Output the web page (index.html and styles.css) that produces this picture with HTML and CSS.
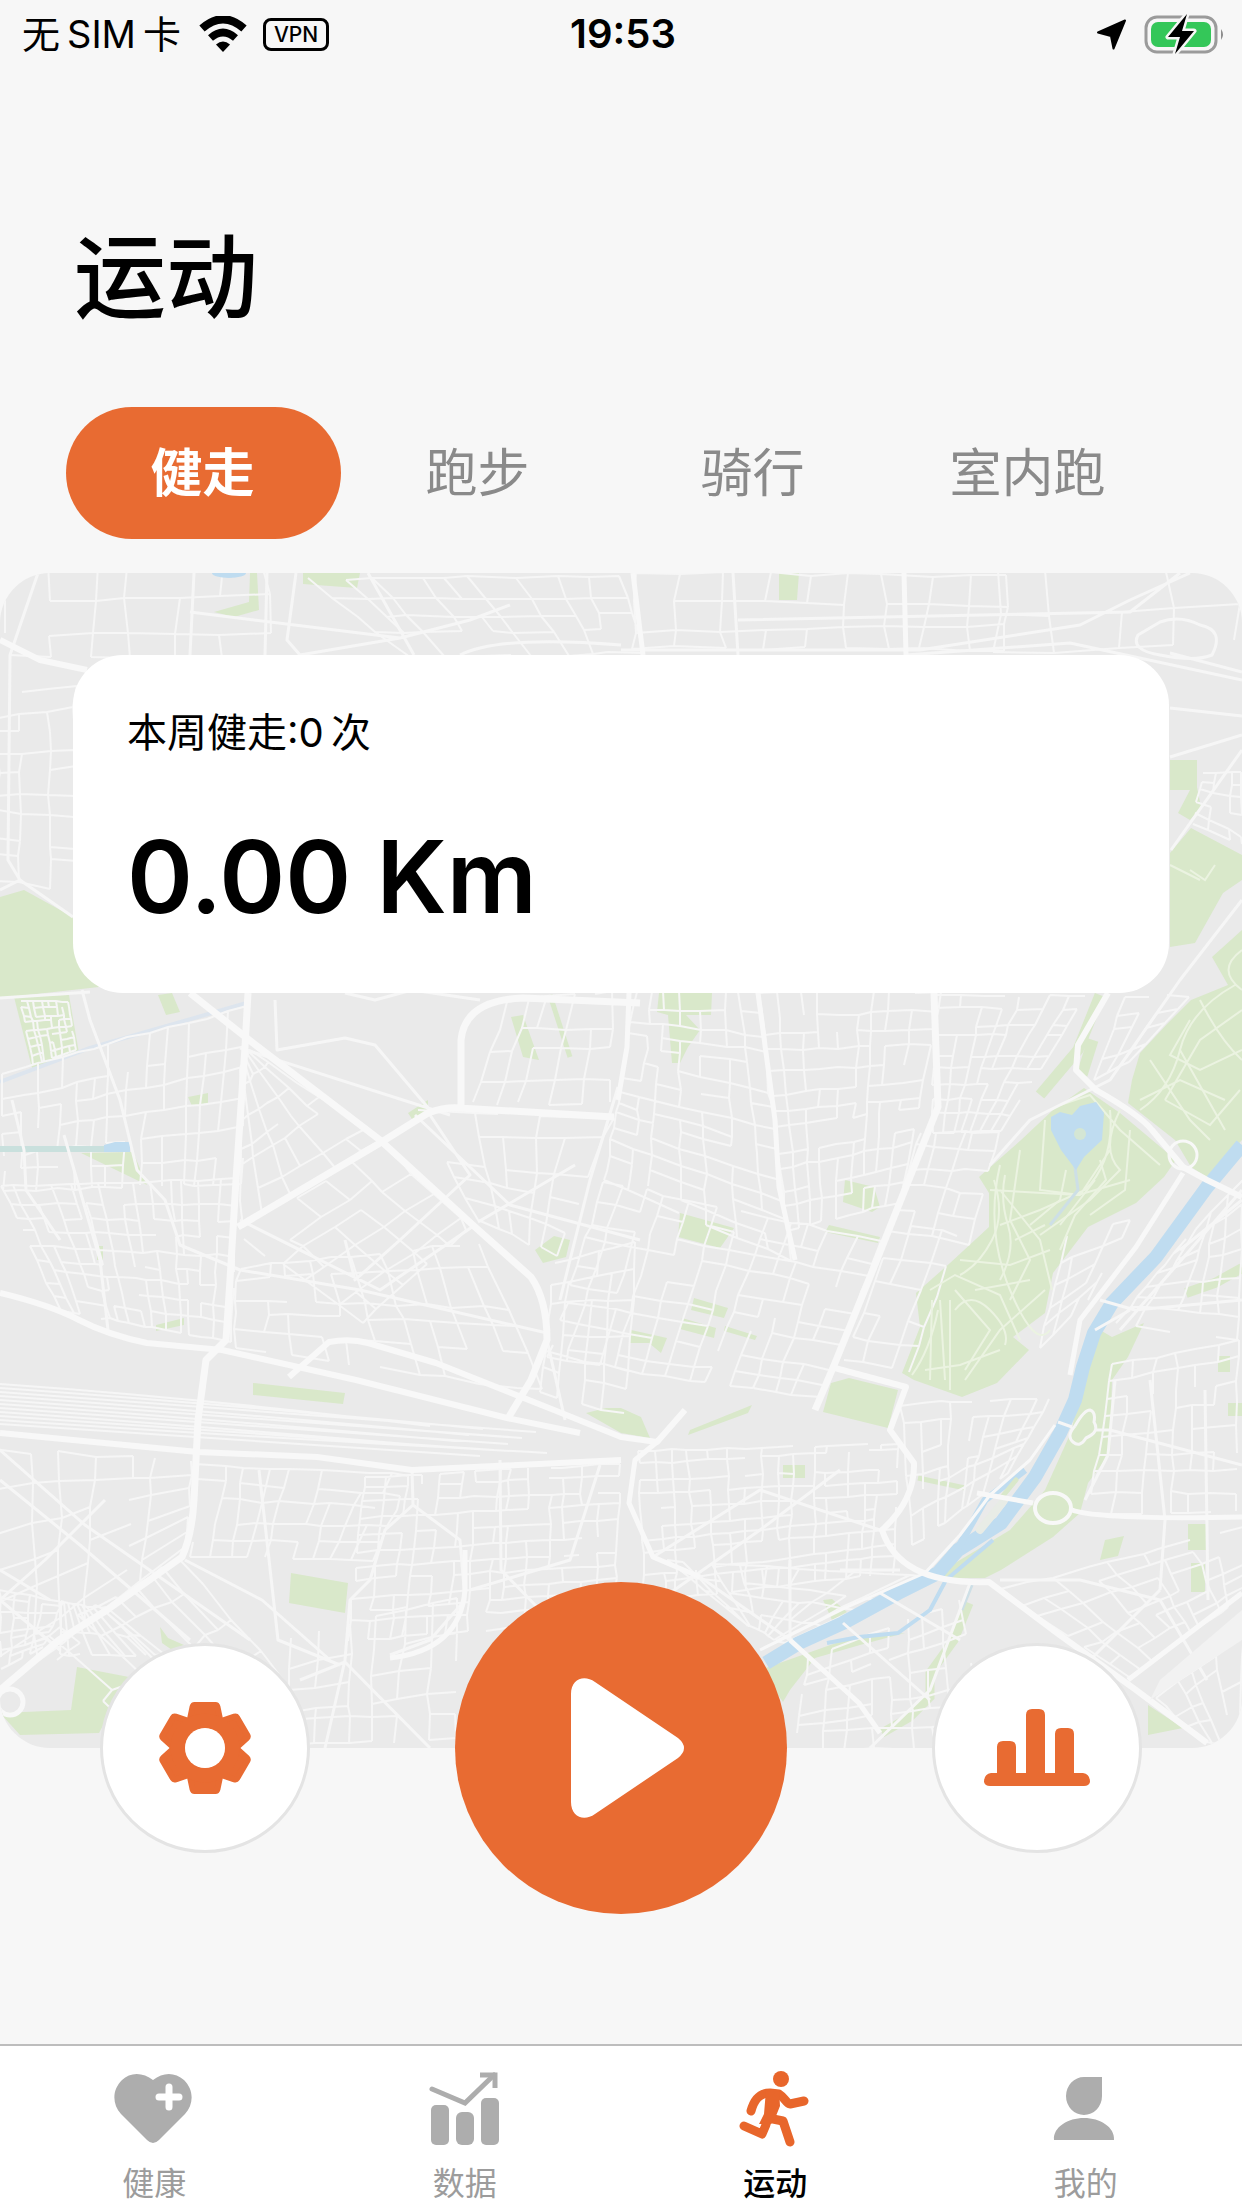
FILE: index.html
```html
<!DOCTYPE html>
<html lang="zh-CN">
<head>
<meta charset="utf-8">
<meta name="viewport" content="width=device-width, initial-scale=1">
<title>运动</title>
<link rel="stylesheet" href="styles.css">
</head>
<body>
<header class="status">
  <div class="status-left">
    <span class="carrier"><span>无</span><span>SIM</span><span>卡</span></span>
    <svg class="wifi" viewBox="0 0 48 36" aria-hidden="true">
      <path d="M3 12.500Q24 -6 45 12.500" fill="none" stroke="#000" stroke-width="8"/>
      <path d="M11.500 22Q24 11 36.500 22" fill="none" stroke="#000" stroke-width="7.500"/>
      <path d="M17 28.500Q24 22.500 31 28.500L24 36Z"/>
    </svg>
    <span class="vpn">VPN</span>
  </div>
  <time class="clock">19:53</time>
  <div class="status-right">
    <svg class="locate" viewBox="0 0 32 32" aria-hidden="true"><path d="M29 2.500 17.500 30.500 15 18 2 14.500Z" stroke="#000" stroke-width="2" stroke-linejoin="round"/></svg>
    <svg class="battery" viewBox="0 0 82 42" aria-hidden="true">
      <rect x="2" y="4" width="70" height="35" rx="11" fill="none" stroke="#9b9b9b" stroke-width="3"/>
      <path d="M77 16Q81 21.500 77 27Z" fill="#8e8e8e"/>
      <rect x="7" y="9" width="60" height="25" rx="7" fill="#34c759"/>
      <path d="M43 1 24 24H36L31 41 50 18H38Z" fill="#000" stroke="#f7f7f7" stroke-width="5" paint-order="stroke" stroke-linejoin="round"/>
    </svg>
  </div>
</header>

<main class="page">
  <h1 class="title">运动</h1>
  <div class="modes" role="tablist">
    <button class="mode mode-active" role="tab" aria-selected="true">健走</button>
    <button class="mode" role="tab" aria-selected="false">跑步</button>
    <button class="mode" role="tab" aria-selected="false">骑行</button>
    <button class="mode" role="tab" aria-selected="false">室内跑</button>
  </div>

  <section class="map">
    <svg class="map-art" viewBox="0 573 1242 1175" preserveAspectRatio="xMidYMid slice" aria-hidden="true">
      <rect y="573" width="1242" height="1175" fill="#eaeaea"/>
      <g fill="#d9e8ca">
        <path d="M250 573H257L259 610 234 617 214 612 249 602ZM303 573H360L357 588 303 584ZM779 573H799L797 600H779Z"/>
        <path d="M0 897 24 890 73 917 75 947 99 987 0 998ZM14 997 69 995 79 1053 32 1068ZM158 995 172 993 180 1012 166 1015Z"/>
        <path d="M511 1017 523 1015 539 1060 523 1057ZM188 1097 208 1093V1103L192 1106ZM408 1113 428 1100V1108L414 1122ZM81 1153 133 1152 147 1185Z"/>
        <path d="M535 1250 554 1236 570 1240 566 1257 543 1263ZM253 1383 345 1393 343 1404 253 1395ZM97 1246H103V1260H97ZM156 1325 184 1318 184 1325 156 1331Z"/>
        <path d="M586 1413 606 1408 621 1408 641 1417 650 1438 621 1433ZM659 993H712L711 1015H686L700 1030 688 1047 680 1063H672L668 1015 657 1012Z"/>
        <path d="M845 1180 874 1187 880 1207 872 1212 843 1202ZM829 1225 880 1237 878 1243 825 1232ZM680 1213 734 1228 720 1248 678 1237ZM694 1298 728 1308 724 1318 691 1310ZM682 1318 716 1328 714 1338 680 1329ZM631 1330 667 1338 661 1353 649 1343 629 1343ZM725 1326 757 1336 755 1340 724 1331Z"/>
        <path d="M831 1383 849 1378 898 1390 888 1428 823 1412ZM752 1405 748 1413 688 1435 690 1430Z"/>
        <path d="M1170 760H1197V787L1201 807 1190 820 1178 813 1190 790H1170ZM1191 828 1242 855V880L1223 893 1195 943 1170 947V853Z"/>
        <path d="M1084 1088 1053 1110 1021 1140 979 1177 989 1193V1227L950 1263 916 1293 920 1327 902 1373 914 1380 962 1397 997 1383 1029 1350 1013 1337 1045 1313 1053 1273 1088 1227 1136 1203 1164 1177 1176 1160 1120 1113Z"/>
        <path d="M1242 930 1212 957 1228 985 1191 1000 1168 1023 1140 1053 1132 1080 1128 1103 1175 1140 1191 1167 1207 1177 1242 1140Z"/>
        <path d="M1144 1323 1112 1337 1100 1330 1080 1380 1072 1430 1045 1490 1010 1530 960 1560 930 1578H985L1001 1570 1053 1537 1080 1513 1088 1483 1110 1453 1112 1380 1128 1357Z"/>
        <path d="M760 1670 850 1638 905 1633 860 1645 815 1658 790 1690 783 1702ZM823 1600 832 1599 847 1612 832 1620Z"/>
        <path d="M77 1667 129 1677 99 1733 20 1735 0 1713 71 1710ZM291 1573 348 1583 345 1613 289 1603ZM160 1627 168 1638 184 1645 172 1650 162 1643ZM1148 1705 1183 1728 1148 1735ZM1191 1563H1205V1592H1191ZM1228 1403H1242V1416H1228ZM783 1465H805V1478H783ZM1188 1524H1208V1550H1188ZM1105 1540 1124 1536 1118 1556 1100 1560ZM1218 1356H1230V1372H1218Z"/>
      </g>
      <g fill="none" stroke="#d9e8ca">
        <path d="M550 995 570 1057" stroke-width="5"/>
        <path d="M1100 995 1078 1050 1040 1095M1093 1040 1082 1075" stroke-width="11"/>
        <path d="M969 1603 954 1640 930 1673 930 1697 910 1717 882 1733" stroke-width="9"/>
        <path d="M1186 1293 1215 1283 1242 1268" stroke-width="10"/>
        <path d="M918 1478 965 1488" stroke-width="5"/>
      </g>
      <path d="M0 1082 90 1048 250 1002" fill="none" stroke="#dde5ee" stroke-width="4"/>
      <g id="streets" fill="none" stroke="#f6f6f6" stroke-width="2" stroke-linejoin="round"></g>
      <g fill="none" stroke="#ebf3e1" stroke-width="2">
        <path d="M1000 1165Q985 1230 1010 1290T1050 1330M1000 1190 1040 1240 1052 1290M1045 1120 1040 1190 1080 1195 1110 1150M990 1190 1078 1195 1130 1180M1110 1110Q1115 1160 1085 1190L1040 1210 1000 1225M930 1290 955 1275 1000 1295 1020 1340M950 1300V1390M932 1300 930 1380M940 1300 945 1380M965 1380 1000 1330 1045 1290M960 1260 1010 1265 1050 1250M925 1370 960 1365 1000 1350M955 1290 990 1330 965 1370M1120 1110Q1100 1150 1120 1170L1090 1200 1040 1235M1060 1105 1090 1095 1120 1130 1160 1165M1020 1150 1010 1220 1030 1260 1010 1300"/>
        <path d="M1235 985Q1190 1010 1180 1050T1140 1110M1242 1010 1200 1040 1165 1100M1242 1050 1200 1070 1170 1055 1190 1020M1150 1060 1190 1120 1210 1140M1165 1100 1210 1125 1240 1090M1200 1000Q1220 1040 1242 1060M1242 950Q1215 970 1242 990M1140 1100 1180 1080 1225 1100M1180 1050 1225 1130M1190 870 1205 880 1215 865M1170 865 1200 880"/>
        <path d="M994 1180Q1005 1215 992 1240T960 1275M1005 1175Q1000 1200 1008 1225T1000 1280M1066 1170 1060 1200 1030 1225M1100 1160 1106 1180 1075 1215 1060 1250M1095 1180 1060 1225M1130 1130 1125 1190 1090 1215M955 1310Q970 1290 990 1310T1005 1345M938 1310Q930 1350 912 1375M975 1290 1030 1280M1015 1240 1045 1225"/>
      </g>
      <g fill="none" stroke="#bfdcf0" stroke-linejoin="round">
        <path d="M1242 1145 1207 1187 1156 1257 1112 1303 1094 1333 1083 1367 1075 1400 1060 1433 1035 1477 1001 1523 958 1550 938 1573 898 1593 843 1623 799 1643 766 1663" stroke-width="14"/>
        <path d="M1025 1470 985 1500 958 1548" stroke-width="7"/>
        <path d="M993 1540 946 1580 930 1610 898 1633 859 1637 827 1643" stroke-width="4"/>
        <path d="M1074 1160 1078 1190 1050 1225M972 1585 962 1610" stroke-width="3" stroke="#cddfe6"/>
        <path d="M0 1149H108" stroke-width="6" stroke="#c9e0dd"/>
        <path d="M1003 1502 980 1530" stroke="#e8ece6" stroke-width="8" stroke-linecap="round"/>
        <path d="M1016 1480 1002 1497" stroke="#d9e8ca" stroke-width="5" stroke-linecap="round"/>
      </g>
      <g fill="#bfdcf0">
        <path d="M1051 1117 1060 1112 1072 1115 1080 1106 1096 1102 1104 1113 1102 1140 1084 1157 1076 1170 1061 1150 1051 1130ZM104 1145 115 1142H130V1152H104Z"/>
        <ellipse cx="229" cy="573" rx="17" ry="5"/>
        <circle cx="1080" cy="1134" r="6" fill="#d4e6d4"/>
      </g>
      <g fill="none" stroke="#f6f6f6" stroke-width="3" stroke-linejoin="round">
        <path d="M38 573 10 655 8 860 20 880 0 890M20 880 73 917M194 573 190 655M267 573 265 655M296 573 287 640 300 655M368 573 414 655M190 612 400 638M300 655 400 638 470 620 510 605M460 655Q500 635 621 645M733 573 738 655M621 650H920L1080 625 1130 600 1190 573M906 655 1070 643 1242 680M738 620 1130 612 1180 573M1170 708 1242 716M1170 757 1242 735M1242 750 1171 850M1170 653 1242 672M1160 655Q1130 650 1138 635L1160 622Q1180 615 1200 625 1225 630 1212 655 1195 662 1160 655"/>
        <path d="M1242 900 1180 980 1110 1080 1030 1120 990 1165M0 998 90 992M82 990 90 1020 120 1100 137 1170 165 1200 180 1245 240 1270 360 1290 547 1333M12 1100 24 1150 26 1190 60 1240M64 1135 100 1260 108 1330M240 1048 450 1115M618 1087 590 1180 560 1300M275 1000 277 1050 345 1038 375 1045 430 1110M345 993 375 1000 412 990 480 1000M415 1115 510 1205 640 1240M430 1115 470 1175 400 1240 355 1280 345 1240M475 1225 380 1290 240 1220M478 1222 575 1165"/>
        <path d="M547 1340 565 1420M1180 1250 1242 1200M1100 1300 1135 1310 1242 1300M1095 1330 1130 1310M1120 1330 1190 1250 1242 1190M1058 1422 1072 1427M1096 1430 1110 1430 1242 1465M1115 1380 1108 1455 1085 1500M1150 1380 1165 1520 1160 1590M1205 1390 1208 1600M1075 1426Q1084 1410 1090 1410 1096 1412 1094 1422 1100 1432 1086 1438 1080 1448 1073 1442 1066 1436 1075 1426"/>
        <path d="M0 1450 85 1525 250 1640M0 1480 80 1545 190 1640M0 1600 60 1650M50 1600 0 1570M105 1500 45 1560 0 1600M185 1560 262 1600 330 1660M259 1470 278 1640 340 1665M412 1470 413 1505 385 1530 370 1580 350 1600 345 1660 325 1748M413 1505 460 1540 465 1600 430 1640 390 1655M500 1460 501 1570 540 1610M300 1680 345 1662 430 1748M600 1465 570 1560 470 1590"/>
        <path d="M700 1577 790 1640M653 1557 760 1490 880 1530M790 1560V1640M840 1570 900 1570M660 1600 760 1530 840 1470M970 1583 930 1690 870 1748M843 1623 930 1700M880 1593 960 1640M1000 1580 1080 1580 1160 1600 1207 1680M1070 1680 1160 1590"/>
      </g>
      <g fill="none" stroke="#f8f8f8" stroke-width="7" stroke-linejoin="round">
        <path d="M248 993 245 1047 236 1180 230 1280 226 1340 206 1360 198 1420 194 1500Q192 1535 182 1557L107 1610 59 1640 0 1690"/>
        <path d="M190 993 253 1043 380 1140 475 1227 531 1277Q547 1300 547 1340L531 1380 507 1420"/>
        <path d="M238 1227 380 1143 428 1113Q445 1107 459 1108L614 1117M461 1108V1040Q465 1000 523 998L640 1003"/>
        <path d="M0 1293Q50 1305 79 1320T147 1343L222 1350 356 1380 507 1418 580 1433M289 1377 329 1342Q350 1338 368 1343L436 1363 554 1410 621 1437 657 1442 685 1410" stroke-width="6"/>
        <path d="M0 1433 198 1452 317 1457 412 1470 621 1460M0 640 40 660 87 670" stroke-width="6"/>
        <path d="M629 993 627 1047 618 1100M758 993 775 1120 779 1187 795 1260M633 573 643 655M904 573 906 655" stroke-width="5"/>
        <path d="M934 993 938 1107 914 1167 874 1267 835 1363 815 1410"/>
        <path d="M1108 993 1078 1045 1076 1070 1096 1090Q1140 1115 1152 1130L1183 1167 1207 1180 1242 1197" stroke-width="6"/>
        <path d="M1183 1173 1136 1247 1080 1320 1070 1375" stroke-width="5"/>
        <path d="M1055 1425 1030 1460 990 1495 960 1535 925 1573 845 1608 760 1650" stroke-width="3"/>
        <path d="M831 1367 906 1387 890 1430 914 1463Q915 1500 882 1530 900 1585 989 1582L1057 1633 1136 1690 1207 1743" stroke-width="6"/>
        <path d="M977 1493 1033 1503M1072 1510Q1100 1520 1242 1517M1242 1593 1128 1680M790 1640 859 1703 880 1733M657 1442 635 1460 629 1503 653 1557 700 1577" stroke-width="5"/>
        <path d="M465 1550V1590Q460 1650 390 1658" stroke-width="5"/>
        <ellipse cx="1053" cy="1508" rx="18" ry="15" stroke-width="4"/>
        <circle cx="1183" cy="1155" r="14" stroke-width="3"/>
        <circle cx="10" cy="1702" r="13" stroke-width="5"/>
      </g>
      <path d="M1242 1610 1160 1680 1150 1700 1242 1640Z" fill="#f2f2f2"/>
    </svg>
    <div class="card">
      <p class="card-label">本周健走:0&thinsp;次</p>
      <p class="card-value">0.00 Km</p>
    </div>
  </section>

  <div class="controls">
    <button class="round" aria-label="设置">
      <svg width="92" height="92" viewBox="-46 -46 92 92" aria-hidden="true">
        <defs><path id="tooth" d="M-10.500 -43H10.500Q12 -43 12.500 -41L15 -29H-15L-12.500 -41Q-12 -43 -10.500 -43Z"/></defs>
        <g fill="#e86b32" stroke="#e86b32" stroke-width="6" stroke-linejoin="round">
          <use href="#tooth"/><use href="#tooth" transform="rotate(60)"/><use href="#tooth" transform="rotate(120)"/>
          <use href="#tooth" transform="rotate(180)"/><use href="#tooth" transform="rotate(240)"/><use href="#tooth" transform="rotate(300)"/>
        </g>
        <circle r="27" fill="none" stroke="#e86b32" stroke-width="15"/>
        <circle r="20" fill="#fff"/>
      </svg>
    </button>
    <button class="start" aria-label="开始">
      <svg width="116" height="142" viewBox="0 0 116 142" aria-hidden="true"><path d="M1 17C1 2 14 -3 25 5L108 61Q120 71 108 81L25 137C14 145 1 140 1 125Z" fill="#fff"/></svg>
    </button>
    <button class="round" aria-label="统计">
      <svg width="106" height="80" viewBox="0 0 106 80" aria-hidden="true">
        <path d="M0 74Q0 66 7 65H13V39Q13 33 19 33H26Q32 33 32 39V65H42V7Q42 1 48 1H55Q61 1 61 7V65H71V26Q71 20 77 20H84Q90 20 90 26V65H99Q106 66 106 74 105 78 100 78H6Q1 78 0 74Z" fill="#e86b32"/>
      </svg>
    </button>
  </div>
</main>

<nav class="tabbar">
  <a class="tab" href="#health">
    <svg width="80" height="80" viewBox="0 0 80 80" aria-hidden="true">
      <path d="M39 10C29 2 16 2 8 10C-2 20 -2 34 7 44L33 70Q39 76 45 70L71 44C80 34 80 20 70 10C61 2 49 2 39 10Z" fill="#adadad"/>
      <path d="M55 17V37M45 27H65" stroke="#fff" stroke-width="7" stroke-linecap="round"/>
    </svg>
    <span>健康</span>
  </a>
  <a class="tab" href="#data">
    <svg width="80" height="80" viewBox="0 0 80 80" aria-hidden="true">
      <g fill="#adadad"><rect x="6" y="35" width="18" height="40" rx="5"/><rect x="31" y="42" width="18" height="33" rx="6"/><rect x="56" y="28" width="18" height="47" rx="5"/></g>
      <path d="M7 19 40 33 69 5" fill="none" stroke="#adadad" stroke-width="5" stroke-linecap="round"/>
      <path d="M55 5H70V18" fill="none" stroke="#adadad" stroke-width="5"/>
    </svg>
    <span>数据</span>
  </a>
  <a class="tab tab-active" href="#sport" aria-current="page">
    <svg width="80" height="80" viewBox="0 0 80 80" aria-hidden="true">
      <circle cx="46" cy="9" r="8" fill="#e8662b"/>
      <path d="M16 41C19 30 24 23 35 23L44 24C49 27 51 33 55 34L69 31M33 48 48 51 55 72M33 48C31 56 29 60 27 64L9 56" fill="none" stroke="#e8662b" stroke-width="9" stroke-linecap="round" stroke-linejoin="round"/>
      <path d="M31 20H44L45 36 41 46 36 54H24L29 44Z" fill="#e8662b"/>
    </svg>
    <span>运动</span>
  </a>
  <a class="tab" href="#me">
    <svg width="80" height="80" viewBox="0 0 80 80" aria-hidden="true">
      <path d="M38 7H56V26A18 19 0 1 1 38 7ZM8 70C7 57 22 48 38 48S69 57 68 70Z" fill="#adadad"/>
    </svg>
    <span>我的</span>
  </a>
</nav>
<script src="map.js"></script>
</body>
</html>
```

FILE: styles.css
```css
* { box-sizing: border-box; }

body {
  margin: 0;
  min-height: 100vh;
  display: flex;
  flex-direction: column;
  background: #f7f7f7;
  color: #000;
  font-family: Inter, "Noto Sans CJK SC", sans-serif;
}

h1, p { margin: 0; font-weight: 400; }

button { border: 0; padding: 0; background: none; font: inherit; color: inherit; }

.status {
  display: grid;
  grid-template-columns: 1fr auto 1fr;
  align-items: center;
  height: 68px;
  padding: 0 18px 0 22px;
}

.status-left, .status-right { display: flex; align-items: center; }
.status-right { justify-content: flex-end; gap: 16px; margin-right: -2px; }

.carrier { display: flex; gap: 7px; font-size: 38px; line-height: 48px; }

.wifi { width: 48px; height: 36px; margin: 0 16px 0 18px; }

.vpn {
  padding: 0 8px;
  border: 3px solid #000;
  border-radius: 8px;
  font-size: 21px;
  font-weight: 500;
  line-height: 27px;
}

.clock { font-size: 40px; font-weight: 600; line-height: 48px; }
.locate { width: 32px; height: 32px; }
.battery { width: 82px; height: 42px; }

.page { flex: 1; }

.title {
  padding: 144px 74px 0;
  font-size: 92px;
  font-weight: 500;
  line-height: 132px;
}

.modes {
  display: grid;
  grid-template-columns: repeat(4, 1fr);
  margin: 63px 76px 34px 66px;
}

.mode {
  height: 132px;
  padding: 0 2px 8px 0;
  border-radius: 66px;
  color: #8a8a8a;
  font-size: 52px;
}

.mode-active { background: #e86b32; color: #fff; font-weight: 700; }

.map {
  position: relative;
  min-height: 1175px;
  padding: 82px 73px;
  border-radius: 50px;
  overflow: hidden;
}

.map-art { position: absolute; inset: 0; width: 100%; height: 100%; }

.card {
  position: relative;
  min-height: 338px;
  padding: 48px 54px;
  border-radius: 50px;
  background: #fff;
}

.card-label { font-size: 40px; line-height: 60px; }
.card-value { margin-top: 54px; font-size: 100px; font-weight: 600; line-height: 120px; }

.controls {
  position: relative;
  display: flex;
  justify-content: center;
  align-items: center;
  gap: 145px;
  margin-top: -166px;
}

.round, .start { display: flex; align-items: center; justify-content: center; border-radius: 50%; }

.round { width: 210px; height: 210px; border: 3px solid #e4e4e4; background: #fff; }

.start { width: 332px; height: 332px; padding-left: 14px; background: #e86b32; }

.tabbar {
  display: grid;
  grid-template-columns: repeat(4, 1fr);
  height: 164px;
  border-top: 2px solid #bdbdbd;
  background: #fff;
}

.tab {
  display: flex;
  flex-direction: column;
  align-items: center;
  gap: 14px;
  padding: 24px 2px 0 0;
  color: #9c9c9c;
  font-size: 32px;
  line-height: 40px;
  text-decoration: none;
}

.tab-active { color: #000; font-weight: 500; }
```

FILE: map.js
```js
// Side streets: each district is a quad (four corners) split into columns and rows.
const districts = [
  [[0,573],[260,573],[260,660],[0,660],6,3],
  [[300,573],[620,573],[640,655],[400,655],9,4],
  [[640,573],[1000,573],[1000,655],[640,655],9,3],
  [[1000,573],[1242,573],[1242,655],[1000,655],4,2],
  [[0,690],[75,680],[75,890],[0,880],3,9],
  [[20,1000],[70,1000],[76,1052],[34,1064],7,8],
  [[0,1080],[245,1010],[236,1180],[0,1190],13,6],
  [[0,1190],[236,1180],[228,1345],[60,1310],14,9],
  [[250,1050],[380,1140],[238,1225],[240,1060],6,6],
  [[380,1140],[475,1227],[360,1320],[240,1230],5,5],
  [[430,1115],[610,1120],[560,1260],[480,1220],5,5],
  [[240,1270],[480,1240],[540,1390],[230,1345],10,5],
  [[550,1270],[640,1240],[620,1420],[540,1390],4,6],
  [[500,1000],[620,1000],[610,1110],[470,1105],5,4],
  [[630,993],[760,993],[795,1260],[600,1180],7,14],
  [[760,993],[934,993],[900,1200],[785,1230],9,12],
  [[600,1180],[880,1240],[820,1400],[550,1360],12,9],
  [[938,993],[1090,993],[1000,1130],[935,1130],7,9],
  [[920,1130],[1000,1130],[970,1240],[890,1230],4,5],
  [[890,1230],[960,1240],[910,1370],[840,1360],3,5],
  [[1130,993],[1190,993],[1130,1060],[1095,1080],3,4],
  [[1205,770],[1242,770],[1242,850],[1195,825],3,5],
  [[1060,1240],[1130,1220],[1080,1310],[1040,1350],3,5],
  [[1120,1320],[1185,1240],[1242,1180],[1242,1340],7,5],
  [[0,1440],[190,1460],[180,1550],[0,1690],6,6],
  [[200,1460],[410,1475],[370,1560],[190,1560],9,5],
  [[370,1475],[621,1465],[621,1620],[350,1640],14,11],
  [[30,1640],[180,1560],[290,1680],[150,1748],9,4],
  [[300,1640],[460,1600],[460,1748],[290,1748],6,5],
  [[0,1590],[60,1600],[40,1650],[0,1670],4,8],
  [[60,1610],[110,1610],[160,1650],[60,1650],10,2],
  [[640,1450],[900,1440],[890,1570],[650,1600],15,10],
  [[660,1560],[930,1580],[790,1640],[740,1620],10,4],
  [[810,1660],[960,1600],[980,1748],[800,1748],8,7],
  [[900,1400],[1050,1400],[1010,1470],[910,1550],8,6],
  [[1115,1360],[1242,1340],[1242,1510],[1095,1510],6,8],
  [[1000,1590],[1242,1525],[1242,1600],[1130,1680],9,6],
  [[1150,1700],[1242,1630],[1242,1748],[1200,1740],4,4]
];

let seed = 7;
const random = () => (seed = (seed * 16807) % 2147483647) / 2147483647;
const mix = (a, b, t) => [a[0] + (b[0] - a[0]) * t, a[1] + (b[1] - a[1]) * t];

let d = "";
for (const [tl, tr, br, bl, cols, rows] of districts) {
  // Every street gets its own shift and slant, and each crossing a slight one besides.
  const line = () => [(random() - 0.5) * 0.5, (random() - 0.5) * 0.6];
  const across = Array.from({ length: rows + 1 }, line);
  const down = Array.from({ length: cols + 1 }, line);
  const nodes = [];
  for (let r = 0; r <= rows; r++) {
    nodes.push([]);
    for (let c = 0; c <= cols; c++) {
      const u = (c + down[c][0] + down[c][1] * (r / rows - 0.5) + (random() - 0.5) * 0.15) / cols;
      const v = (r + across[r][0] + across[r][1] * (c / cols - 0.5) + (random() - 0.5) * 0.15) / rows;
      nodes[r].push(mix(mix(tl, tr, u), mix(bl, br, u), v).map(Math.round));
    }
  }
  for (let r = 0; r <= rows; r++) {
    for (let c = 0; c <= cols; c++) {
      if (c < cols && random() > 0.2) d += `M${nodes[r][c]}L${nodes[r][c + 1]}`;
      if (r < rows && random() > 0.2) d += `M${nodes[r][c]}L${nodes[r + 1][c]}`;
    }
  }
}

// Rail yard: a bundle of tracks that narrows and ends staggered towards the east.
for (let i = 0; i < 11; i++) {
  d += `M0 ${1384 + i * 4}Q200 ${1398 + i * 4} ${430 + (i * 53) % 120} ${1426 + i * 3}`;
}

const streets = document.createElementNS("http://www.w3.org/2000/svg", "path");
streets.setAttribute("d", d);
document.getElementById("streets").append(streets);
```
